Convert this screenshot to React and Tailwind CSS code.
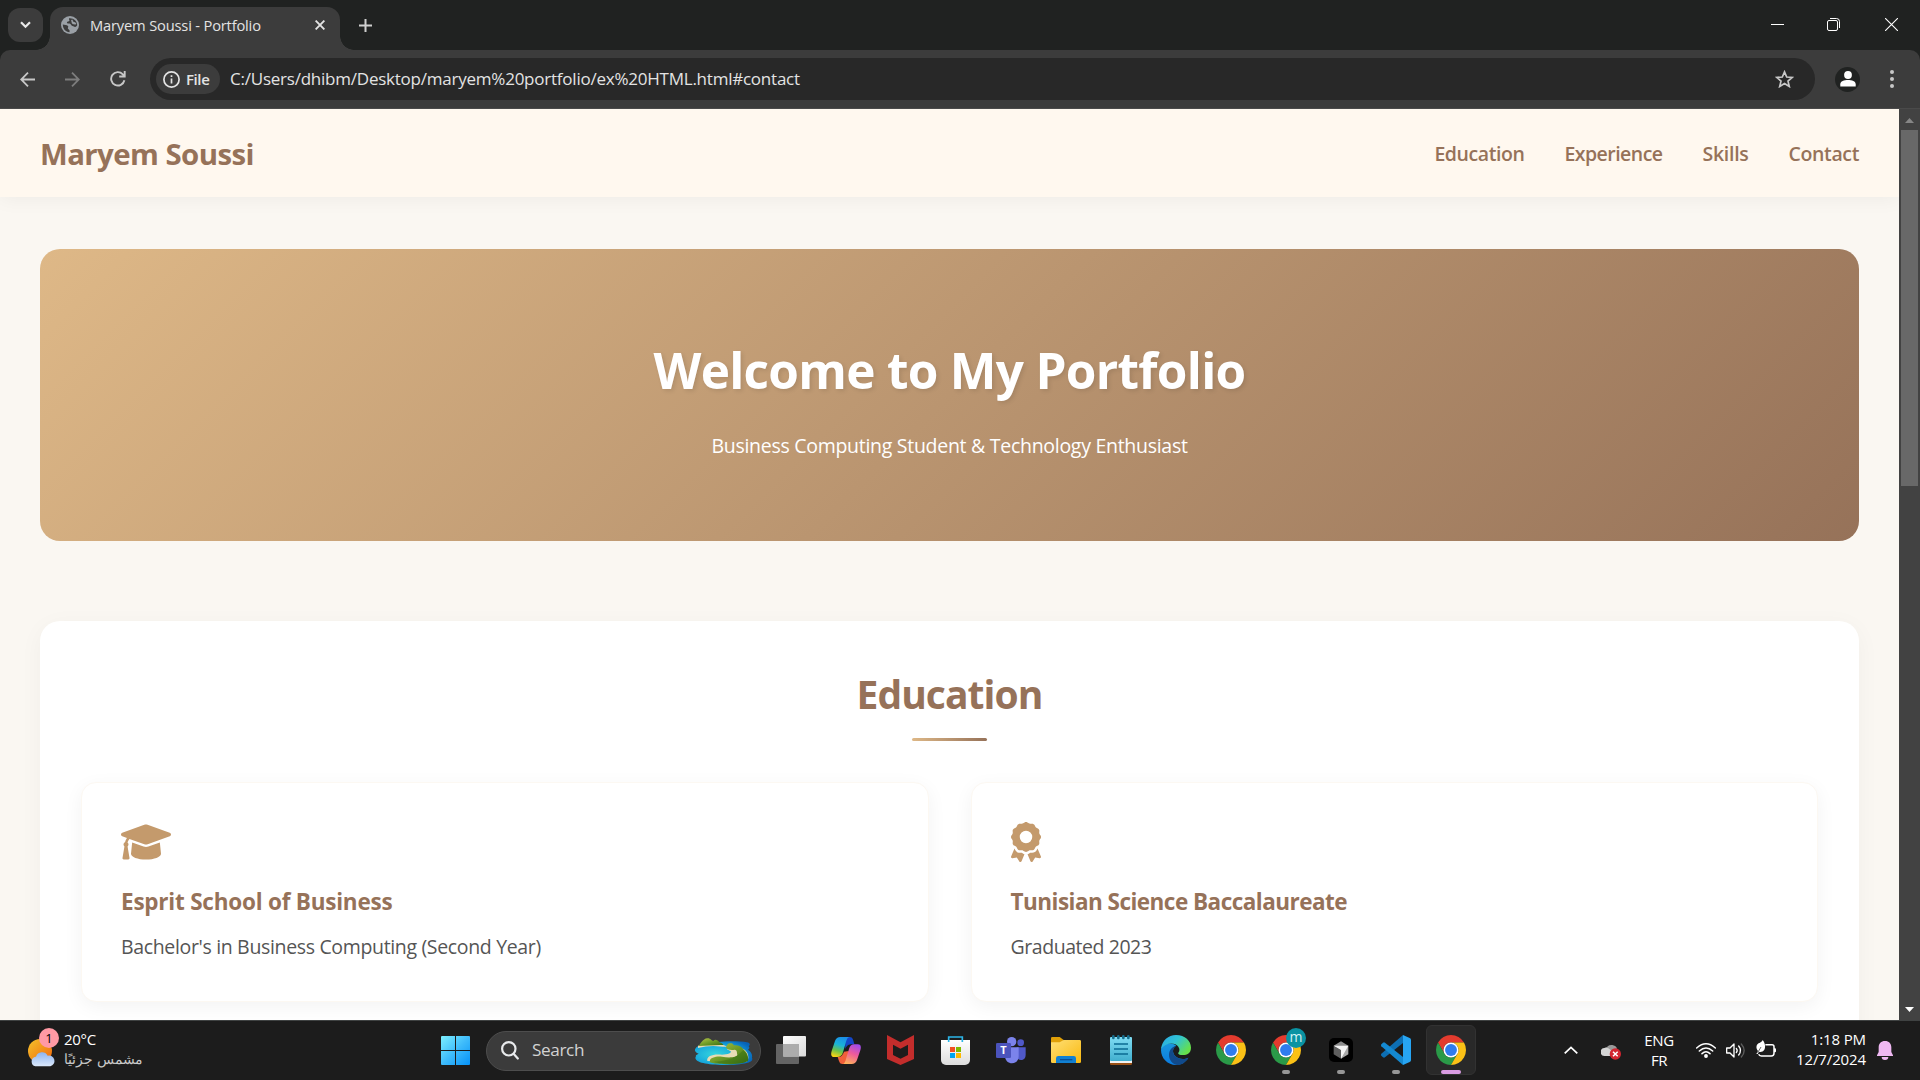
import { FaAward } from 'react-icons/fa6';

const navLinks = [
  { label: 'Education', className: 'tracking-[-0.43px]' },
  { label: 'Experience', className: 'tracking-[-0.53px]' },
  { label: 'Skills', className: 'tracking-[-0.28px]' },
  { label: 'Contact', className: 'tracking-[-0.37px]' },
];

/* ---------- browser chrome ---------- */

function TabStrip() {
  return (
    <div className="flex h-[50px] items-end bg-[#202221]">
      <button className="mb-2 ml-2 flex h-[34px] w-[35px] items-center justify-center rounded-xl bg-[#3c3c3c]">
        <svg width="11" height="8" viewBox="0 0 11 8" fill="none" stroke="#e8e8e8" strokeWidth="2.2">
          <path d="M1 1.2 5.5 5.8 10 1.2" />
        </svg>
      </button>
      <div className="relative ml-[7px] flex h-[43px] w-[290px] items-center rounded-t-[13px] bg-[#3c3c3c] pb-[7px] pl-[11px] pr-[15px]">
        <span className="absolute bottom-0 -left-[14px] size-[14px] bg-[radial-gradient(circle_at_0_0,transparent_13.5px,#3c3c3c_14px)]" />
        <span className="absolute bottom-0 -right-[14px] size-[14px] bg-[radial-gradient(circle_at_100%_0,transparent_13.5px,#3c3c3c_14px)]" />
        <svg width="18" height="18" viewBox="0 0 18 18">
          <circle cx="9" cy="9" r="9" fill="#9aa0a6" />
          <path d="M1.8 8.6C3.6 9 5.8 8.8 7 10c.9 1-.6 1.6 0 2.7.5.9 1.8.8 1.6 2.2l-.1 1.300C4.700 16.200 1.800 13 1.800 8.600Z" fill="#3c3c3c" />
          <path d="M8 2.200c-.3 1.500.8 1.700.4 2.500-.4.9-2.300.5-2.500 1.700-.2 1.100 1.500 1 2.700 1.100 1.500.2 1.300 2.300 2.900 2.500 1.300.1 1.600 1.100 2.800.9 1.300-.2 1.900-1.300 1.900-1.900C16.200 5 12.700 1.700 8 2.200Zm3.200 1.300c.9.600.3 1.500 1.300 2.300.8.700 2.200.3 2.700 1.600.2.800-.7 1.300-1.500 1-1.200-.4-1.700.2-2.600-.9-.8-1-.1-1.500-.8-2.300-.5-.6.1-1.500.9-1.700Z" fill="#3c3c3c" fillRule="evenodd" />
        </svg>
        <span className="-mt-px ml-[11px] grow whitespace-nowrap text-[14.7px] leading-5 tracking-[-0.18px] text-[#e3e3e3]">
          Maryem Soussi - Portfolio
        </span>
        <svg width="10" height="10" viewBox="0 0 10 10" stroke="#e3e3e3" strokeWidth="1.9">
          <path d="m.6.6 8.800 8.800M9.400.6.6 9.400" />
        </svg>
      </div>
      <svg className="mb-[18px] ml-[19px]" width="13" height="13" viewBox="0 0 13 13" stroke="#cfcfcf" strokeWidth="2">
        <path d="M6.500 0v13M0 6.500h13" />
      </svg>
      <div className="ml-auto flex h-[50px] items-center pb-px pr-[22px]">
        <div className="h-px w-[13px] bg-white" />
        <svg className="ml-[43px]" width="13" height="13" viewBox="0 0 13 13" fill="none" stroke="#fff">
          <path d="M3 .5h6.500a3 3 0 0 1 3 3V10" />
          <rect x=".5" y="2.5" width="10" height="10" rx="1.5" />
        </svg>
        <svg className="ml-[45px]" width="13" height="13" viewBox="0 0 13 13" stroke="#fff" strokeWidth="1.1">
          <path d="m0 0 13 13M13 0 0 13" />
        </svg>
      </div>
    </div>
  );
}

function Toolbar() {
  return (
    <div className="h-[59px] bg-[#202221]">
      <div className="flex h-full items-center rounded-t-[10px] border-b border-[#4a4a4a] bg-[#3c3c3c] pl-5 pr-[26px]">
        <svg width="15" height="15" viewBox="0 0 15 15" fill="none" stroke="#c7c7c7" strokeWidth="1.8">
          <path d="M15 7.500H1.200M8 .7 1.200 7.500 8 14.300" />
        </svg>
        <svg className="ml-[30px]" width="15" height="15" viewBox="0 0 15 15" fill="none" stroke="#7d7d7d" strokeWidth="1.8">
          <path d="M0 7.500h13.800M7 .7l6.800 6.800L7 14.300" />
        </svg>
        <svg className="ml-[30px]" width="16" height="16" viewBox="0 0 16 16" fill="none" stroke="#c7c7c7" strokeWidth="1.9">
          <path d="M14.400 9.300A6.700 6.700 0 1 1 12.800 3.300L14.600 5.200M14.700 0v5.500H9.200" />
        </svg>
        <div className="ml-6 flex h-[42px] w-[1665px] items-center rounded-full bg-[#282828] pl-[6px] pr-[21px]">
          <div className="flex h-[30px] w-16 items-center rounded-full bg-[#3c3c3c] pl-[7px]">
            <svg width="17" height="17" viewBox="0 0 17 17" fill="none" stroke="#e3e3e3" strokeWidth="1.7">
              <circle cx="8.5" cy="8.5" r="7.6" />
              <path d="M8.500 7.500v5M8.500 4.200v1.800" />
            </svg>
            <span className="-mt-px ml-[6px] text-[15px] font-semibold leading-5 tracking-[-0.4px] text-[#e3e3e3]">File</span>
          </div>
          <span className="ml-[10px] whitespace-nowrap text-[17px] leading-6 tracking-[-0.23px] text-[#e3e3e3]">
            C:/Users/dhibm/Desktop/maryem%20portfolio/ex%20HTML.html#contact
          </span>
          <svg className="ml-auto" width="19" height="18" viewBox="0 0 19 18" fill="none" stroke="#c7c7c7" strokeWidth="1.7">
            <path d="m9.500 1.900 2.200 5.100 5.500.5-4.200 3.600 1.300 5.400-4.800-2.900-4.800 2.900 1.300-5.400L1.800 7.500l5.500-.5z" />
          </svg>
        </div>
        <div className="ml-5 flex size-[25px] items-center justify-center rounded-full bg-[#202221]">
          <svg width="16" height="16" viewBox="0 0 16 16" fill="#fff">
            <circle cx="8" cy="4" r="3.9" />
            <path d="M.3 15.500v-2.200c0-3 3.800-4.300 7.700-4.300s7.700 1.300 7.700 4.300v2.200z" />
          </svg>
        </div>
        <div className="ml-auto flex flex-col gap-[3px]">
          <span className="size-1 rounded-full bg-[#c7c7c7]" />
          <span className="size-1 rounded-full bg-[#c7c7c7]" />
          <span className="size-1 rounded-full bg-[#c7c7c7]" />
        </div>
      </div>
    </div>
  );
}

function Scrollbar() {
  return (
    <div className="flex w-[21px] shrink-0 flex-col items-center bg-[#424242]">
      <svg className="mt-[9px]" width="9" height="5" viewBox="0 0 9 5" fill="#868686"><path d="M0 5 4.500 0 9 5z" /></svg>
      <div className="mt-[7px] h-[356px] w-[17px] bg-[#686868]" />
      <svg className="mb-2 mt-auto" width="9" height="5" viewBox="0 0 9 5" fill="#fff"><path d="M0 0 4.500 5 9 0z" /></svg>
    </div>
  );
}

/* ---------- page ---------- */

function GraduationCap() {
  return (
    <svg width="50" height="40" viewBox="0 0 640 512" fill="currentColor">
      <path d="M623.1 136.900l-282.700-101.200c-13.730-4.910-28.700-4.910-42.460 0L16.050 136.900C6.438 140.400 0 149.600 0 160s6.438 19.650 16.050 23.090L76.070 204.600c-11.890 15.800-20.260 34.160-24.550 53.950C40.050 263.400 32 274.800 32 288c0 9.953 4.814 18.490 11.940 24.360l-24.830 149C17.480 471.100 25 480 34.890 480H93.110c9.887 0 17.410-8.879 15.780-18.630l-24.830-149C91.190 306.500 96 297.100 96 288c0-10.290-5.174-19.030-12.720-24.890c4.252-17.760 12.880-33.820 24.940-47.030l190.600 68.230c13.730 4.910 28.700 4.910 42.460 0l282.700-101.200C633.600 179.600 640 170.400 640 160S633.600 140.400 623.100 136.900zM351.100 314.400C341.700 318.100 330.900 320 320 320c-10.920 0-21.690-1.867-32-5.555L142.800 262.500L128 405.300C128 446.600 213.100 480 320 480c105.100 0 192-33.400 192-74.670l-14.780-142.900L351.100 314.400z" />
    </svg>
  );
}

function Card({ icon, title, titleClass, text, textClass }) {
  return (
    <article className="h-[220px] rounded-[15px] border border-[#fcf8f2] bg-white px-[39px] pt-[39px] shadow-[0_5px_19px_rgba(0,0,0,0.05)]">
      <div className="h-10 text-[#c49a6c]">{icon}</div>
      <h3 className={'mt-[25px] whitespace-nowrap text-[22.5px] font-bold leading-[30px] text-[#967259] ' + titleClass}>{title}</h3>
      <p className={'mt-[14px] whitespace-nowrap text-[19.5px] leading-8 text-[#555] ' + textClass}>{text}</p>
    </article>
  );
}

function PortfolioPage() {
  return (
    <div className="grow overflow-hidden bg-[#faf7f2]">
      <header className="flex h-[88px] items-center justify-between bg-[#fff8ef] px-10 pt-[2px] text-[#967259] shadow-[0_2px_19px_rgba(0,0,0,0.05)]">
        <span className="whitespace-nowrap text-[29.4px] font-bold tracking-[-0.57px]">Maryem Soussi</span>
        <nav className="flex gap-10 text-[19.5px] font-semibold">
          {navLinks.map((l) => (
            <a key={l.label} className={l.className}>{l.label}</a>
          ))}
        </nav>
      </header>
      <section className="mx-10 mt-[52px] flex h-[292px] flex-col items-center rounded-[20px] bg-linear-[135deg,#deb887,#967259] pt-[91px] text-white">
        <h1 className="text-[49.5px] font-bold leading-[60px] tracking-[-0.7px] [text-shadow:2px_2px_4px_rgba(0,0,0,0.1)]">
          Welcome to My Portfolio
        </h1>
        <p className="mt-[30px] text-[19.5px] leading-8 tracking-[-0.28px]">Business Computing Student &amp; Technology Enthusiast</p>
      </section>
      <section className="mx-10 mt-20 h-[520px] rounded-[20px] bg-white px-[41px] pt-[41px] shadow-[0_5px_25px_rgba(0,0,0,0.04)]">
        <h2 className="text-center text-[39px] font-bold leading-[64px] tracking-[-0.93px] text-[#967259]">Education</h2>
        <div className="mx-auto mt-3 h-[3px] w-[75px] rounded-[2px] bg-linear-to-r from-[#deb887] to-[#967259]" />
        <div className="mt-[41px] grid grid-cols-2 gap-[42px]">
          <Card
            icon={<GraduationCap />}
            title="Esprit School of Business"
            titleClass="tracking-[-0.22px]"
            text="Bachelor's in Business Computing (Second Year)"
            textClass="tracking-[-0.34px]"
          />
          <Card
            icon={<FaAward className="h-10 w-[30px]" />}
            title="Tunisian Science Baccalaureate"
            titleClass="tracking-[-0.52px]"
            text="Graduated 2023"
            textClass="tracking-[-0.44px]"
          />
        </div>
      </section>
    </div>
  );
}

/* ---------- taskbar ---------- */

function WindowsLogo() {
  return (
    <svg width="29" height="29" viewBox="0 0 29 29">
      <defs>
        <linearGradient id="win" x1="0" y1="0" x2="29" y2="29" gradientUnits="userSpaceOnUse">
          <stop stopColor="#7df0ff" /><stop offset=".5" stopColor="#3fbcfb" /><stop offset="1" stopColor="#0592f8" />
        </linearGradient>
      </defs>
      <path fill="url(#win)" d="M1 0h13v14H0V1a1 1 0 0 1 1-1zM15 0h13a1 1 0 0 1 1 1v13H15zM0 15h14v14H1a1 1 0 0 1-1-1zM15 15h14v13a1 1 0 0 1-1 1H15z" />
    </svg>
  );
}

function SearchScene() {
  return (
    <svg width="60" height="28" viewBox="0 0 180 84">
      <defs>
        <radialGradient id="sea" cx=".35" cy=".55" r=".7">
          <stop stopColor="#35d6dd" /><stop offset=".6" stopColor="#15a5dc" /><stop offset="1" stopColor="#0762b8" />
        </radialGradient>
        <linearGradient id="hill" x1="0" y1="0" x2="1" y2="1">
          <stop stopColor="#b9c64a" /><stop offset=".5" stopColor="#6c9a26" /><stop offset="1" stopColor="#37660f" />
        </linearGradient>
      </defs>
      <path fill="url(#sea)" d="M6 32C20 16 120 8 158 16c10 2 12 6 6 12 4 4 2 8-2 10 8 4 14 14 12 24 4 8-4 14-16 16-30 8-104 8-130 0C10 74 0 66 6 58c-2-4 4-6 8-8-12-4-14-12-8-18Z" />
      <path fill="#e8dcb4" d="M12 33c16-4 30-5 46-6 18 0 30 4 42 2-14-10-60-11-88-3z" />
      <path fill="url(#hill)" d="M14 27c4-4 12-22 26-23 10-1 12 8 18 8 6-7 14-2 18 4 6 2 12 5 12 8-26-1-50 2-74 3Z" />
      <path fill="#e8dcb4" d="M40 72c-4-16 20-22 44-19 18 0 30-6 26-10l-12-7c14-4 52-10 62 12 6 14 2 24-4 27z" />
      <path fill="url(#hill)" d="M96 32c2-8 6-14 14-13 4-2 8 2 10 6 10-2 22 2 28 12 12 10 16 22 14 34-12 12-90 14-114 5-4-14 18-19 36-17 24 5 44 1 46-5-2-10 0-14-8-16-12 2-20 0-26-6Z" />
      <path fill="#356f12" opacity=".45" d="M60 74c30-2 60-8 76-24l12-10c8 8 14 18 14 31-12 10-80 12-102 3Z" />
    </svg>
  );
}

function TaskViewIcon() {
  return (
    <svg width="30" height="28" viewBox="0 0 30 28">
      <defs><linearGradient id="tv" x1="0" y1="0" x2="1" y2="1"><stop stopColor="#fff" /><stop offset="1" stopColor="#d9d9d9" /></linearGradient></defs>
      <rect y="8" width="23" height="20" rx="1" fill="#646464" />
      <rect x="7" width="23" height="20.5" rx="1" fill="url(#tv)" />
      <path d="M7 8h16v12.500H7z" fill="#acacac" />
    </svg>
  );
}

function CopilotIcon() {
  return (
    <svg width="30" height="27" viewBox="0 0 90 81">
      <defs>
        <linearGradient id="cpA" x1=".6" y1="0" x2=".3" y2="1">
          <stop stopColor="#1b8fe8" /><stop offset=".4" stopColor="#19b3d8" /><stop offset=".7" stopColor="#6cc24a" /><stop offset="1" stopColor="#f7d416" />
        </linearGradient>
        <linearGradient id="cpB" x1=".7" y1="0" x2=".3" y2="1">
          <stop stopColor="#a44bea" /><stop offset=".45" stopColor="#ee5a9b" /><stop offset="1" stopColor="#ffb25a" />
        </linearGradient>
      </defs>
      <path fill="#1446c8" d="M42 0h14c10 0 11 10 14 22h-8c-8 0-14 2-19 14z" />
      <path fill="#f2603a" d="M48 81H34c-9 0-10-10-14-21 10 0 14-4 19-16l14-2z" />
      <path fill="url(#cpA)" d="M28 0h28c-6 0-9 6-12 18l-8 28c-3 10-8 14-18 14h-8C0 60-1 52 2 42l10-30C15 4 20 0 28 0Z" />
      <path fill="url(#cpB)" d="M62 81H34c6 0 9-7 12-19l8-26c3-10 8-14 16-14h10c10 0 11 8 8 18L78 69c-3 8-8 12-16 12Z" />
    </svg>
  );
}

function McAfeeIcon() {
  return (
    <svg width="27" height="30" viewBox="0 0 81 90">
      <path fill="#c32d2c" fillRule="evenodd" d="M0 0l40.500 22L81 0v72L40.500 90 0 72zM18 29v31l22.500 11L63 60V29L40.500 41z" />
    </svg>
  );
}

function StoreIcon() {
  return (
    <svg width="29" height="29" viewBox="0 0 87 87">
      <defs><linearGradient id="st" x1="0" y1="0" x2="0" y2="1"><stop stopColor="#fff" /><stop offset="1" stopColor="#dcdcdc" /></linearGradient></defs>
      <path d="M0 12h87v60a15 15 0 0 1-15 15H15A15 15 0 0 1 0 72z" fill="url(#st)" />
      <path d="M23 18V3h41v15" fill="none" stroke="#2bb5e8" strokeWidth="5" />
      <path fill="#f25022" d="M27 33h15v15H27z" /><path fill="#7fba00" d="M45 33h15v15H45z" />
      <path fill="#00a4ef" d="M27 51h15v15H27z" /><path fill="#ffb900" d="M45 51h15v15H45z" />
    </svg>
  );
}

function TeamsIcon() {
  return (
    <svg width="30" height="27" viewBox="0 0 90 81">
      <circle cx="74" cy="17" r="10" fill="#5059c9" />
      <path d="M62 31h27v22c0 10-6 16-14 16-7 0-13-5-13-13z" fill="#5059c9" />
      <circle cx="47" cy="14" r="14" fill="#7b83eb" />
      <path d="M27 31h41v26c0 14-9 22-20 22S27 71 27 57z" fill="#7b83eb" />
      <rect y="18" width="45" height="45" rx="4" fill="#4b53bc" />
      <text x="22.5" y="52" textAnchor="middle" fontSize="33" fontWeight="700" fill="#fff">T</text>
    </svg>
  );
}

function FolderIcon() {
  return (
    <svg width="30" height="26" viewBox="0 0 90 78">
      <defs><linearGradient id="fo" x1="0" y1="0" x2="1" y2="1"><stop stopColor="#ffdf75" /><stop offset="1" stopColor="#f9b90f" /></linearGradient></defs>
      <path d="M0 4q0-4 4-4h22l12 9v14H0z" fill="#e0a008" />
      <path d="M0 16h26l12-7h48q4 0 4 4v61q0 4-4 4H4q-4 0-4-4z" fill="url(#fo)" />
      <path d="M15 78V64q0-7 7-7h46q7 0 7 7v14z" fill="#1180d2" />
      <path d="M27 68h37" stroke="#0b4f96" strokeWidth="4" />
    </svg>
  );
}

function NotepadIcon() {
  return (
    <svg width="22" height="30" viewBox="0 0 66 90">
      <defs><linearGradient id="np" x1="0" y1="0" x2="0" y2="1"><stop stopColor="#7fdcf3" /><stop offset="1" stopColor="#41afcf" /></linearGradient></defs>
      <path d="M0 78h66v8q0 4-4 4H4q-4 0-4-4z" fill="#9a5015" />
      <path d="M0 74h66v10H0z" fill="#f1f1f1" />
      <rect y="6" width="66" height="72" rx="3" fill="url(#np)" />
      <path d="M12 27h42M12 42h42M12 57h42" stroke="#0a6b93" strokeWidth="5" />
      <path d="M10 4v5M25 4v5M40 4v5M55 4v5" stroke="#176d8c" strokeWidth="8" strokeLinecap="round" />
    </svg>
  );
}

function EdgeIcon() {
  return (
    <svg width="30" height="30" viewBox="0 0 90 90">
      <defs>
        <linearGradient id="edA" x1="0" y1="0" x2="1" y2=".6"><stop stopColor="#2aa5e6" /><stop offset=".5" stopColor="#30c4d4" /><stop offset="1" stopColor="#66e04a" /></linearGradient>
        <linearGradient id="edB" x1="0" y1="0" x2="0" y2="1"><stop stopColor="#1a97dc" /><stop offset="1" stopColor="#0a7be0" /></linearGradient>
      </defs>
      <path fill="url(#edB)" d="M0 45C2 22 28 20 46 32c-12 6-13 20-4 30 10 11 28 12 40 6-8 14-22 22-37 22C20 90 0 70 0 45Z" />
      <path fill="#114a8b" d="M24 60c0-18 12-26 22-28-12 8-12 22-4 30 10 11 28 12 40 6-8 14-20 22-34 22C34 88 24 74 24 60Z" />
      <path fill="url(#edA)" d="M0 42C3 16 22 0 45 0c27 0 45 18 45 38 0 16-12 22-24 22-10 0-16-3-14-7 4-5 5-11 0-18C42 20 12 22 0 42Z" />
    </svg>
  );
}

function ChromeIcon() {
  return (
    <svg width="30" height="30" viewBox="0 0 48 48">
      <path fill="#e33b2e" d="M24 12h20.780A24 24 0 0 0 3.220 12L13.600 30A12 12 0 0 1 24 12z" />
      <path fill="#2a9a48" d="M34.390 30 24 48A24 24 0 0 1 3.220 12L13.600 30a12 12 0 0 0 20.790 0z" />
      <path fill="#fbc116" d="M24 12h20.780A24 24 0 0 1 24 48l10.390-18A12 12 0 0 0 24 12z" />
      <circle cx="24" cy="24" r="12" fill="#fff" />
      <circle cx="24" cy="24" r="9.5" fill="#2f7cee" />
    </svg>
  );
}

function CursorIcon() {
  return (
    <svg width="24" height="24" viewBox="0 0 72 72">
      <rect width="72" height="72" rx="15" fill="#000" />
      <path d="M36 10 58 23 36 36 14 23z" fill="#8b8b8b" />
      <path d="M14 23 36 36v26L14 49z" fill="#5e5e5e" />
      <path d="M58 23v26L36 62V36z" fill="#a9a9a9" />
      <path d="M14 23h44L36 62V36z" fill="#f3f3f3" />
    </svg>
  );
}

function VSCodeIcon() {
  return (
    <svg width="30" height="30" viewBox="0 0 90 90">
      <path d="M66 0v24L12 67q-3 2-6 0l-5-5q-2-3 0-6z" fill="#0d6fb4" />
      <path d="M66 90V66L12 23q-3-2-6 0l-5 5q-2 3 0 6z" fill="#1489d1" />
      <path d="M66 0l20 9q4 2 4 6v60q0 4-4 6l-20 9z" fill="#27a5f3" />
    </svg>
  );
}

function AppCell({ children, indicator }) {
  return (
    <div className="relative flex h-full w-[55px] items-center justify-center pb-px">
      {children}
      {indicator && <span className="absolute bottom-[6px] h-1 w-2 rounded-full bg-[#969696]" />}
    </div>
  );
}

function Taskbar() {
  return (
    <div className="flex h-[60px] items-center border-t border-[#3f4242] bg-[#1c1c1c] text-white">
      <div className="flex w-[441px] items-center pb-[3px] pl-7">
        <div className="relative h-[38px] w-8">
          <svg className="mt-[9px]" width="28" height="28" viewBox="0 0 84 84">
            <defs>
              <linearGradient id="sun" x1="0" y1="0" x2="1" y2="1"><stop stopColor="#f5c22b" /><stop offset="1" stopColor="#f0660c" /></linearGradient>
              <linearGradient id="cl" x1="0" y1="0" x2="0" y2="1"><stop stopColor="#8db4ef" /><stop offset="1" stopColor="#dbe8fb" /></linearGradient>
            </defs>
            <circle cx="36" cy="36" r="36" fill="url(#sun)" />
            <path d="M22 82a15 15 0 0 1 0-29h2a19 19 0 0 1 35-3 16 16 0 0 1 8 32z" fill="url(#cl)" />
          </svg>
          <span className="absolute -top-[2px] left-[11px] flex size-5 items-center justify-center rounded-full bg-[#ff99a4] text-[13px] leading-none text-black">1</span>
        </div>
        <div className="ml-1 flex flex-col">
          <span className="text-[15px] leading-[20px] tracking-[-0.3px]">20°C</span>
          <span dir="rtl" className="text-[14px] leading-[20px] text-[#c8c8c8]">مشمس جزئيًا</span>
        </div>
      </div>
      <WindowsLogo />
      <div className="ml-4 flex h-10 w-[275px] items-center rounded-full border border-[#4d4d4d] bg-[#3b3b3b] pl-[14px] pr-[6px]">
        <svg width="18" height="19" viewBox="0 0 18 19" fill="none" stroke="#e8eaec" strokeWidth="2.2" strokeLinecap="round">
          <circle cx="7.8" cy="7.8" r="6.7" /><path d="m12.800 13 4 4.500" />
        </svg>
        <span className="-mt-px ml-[13px] text-[17.2px] leading-6 tracking-[-0.4px] text-[#d2d2d2]">Search</span>
        <span className="ml-auto"><SearchScene /></span>
      </div>
      <div className="ml-[2px] flex h-full">
        <AppCell><TaskViewIcon /></AppCell>
        <AppCell><CopilotIcon /></AppCell>
        <AppCell><McAfeeIcon /></AppCell>
        <AppCell><StoreIcon /></AppCell>
        <AppCell><TeamsIcon /></AppCell>
        <AppCell><FolderIcon /></AppCell>
        <AppCell><NotepadIcon /></AppCell>
        <AppCell><EdgeIcon /></AppCell>
        <AppCell><ChromeIcon /></AppCell>
        <AppCell indicator>
          <ChromeIcon />
          <span className="absolute right-[7px] top-[7px] flex size-5 items-center justify-center rounded-full bg-[#0a93a3] pb-[3px] text-[14px] leading-none text-[#d5f2f4]">m</span>
        </AppCell>
        <AppCell indicator><CursorIcon /></AppCell>
        <AppCell indicator><VSCodeIcon /></AppCell>
        <div className="flex h-full w-[56px] items-center justify-center pb-px">
          <div className="relative flex size-[50px] items-center justify-center rounded-[6px] border border-[#323232] bg-[#292929]">
            <ChromeIcon />
            <span className="absolute bottom-0 h-1 w-5 rounded-full bg-[#d99be2]" />
          </div>
        </div>
      </div>
      <div className="ml-auto flex items-center pb-px pr-[27px]">
        <svg width="14" height="8" viewBox="0 0 14 8" fill="none" stroke="#fff" strokeWidth="1.7"><path d="m.7 7.400 6.300-6 6.300 6" /></svg>
        <svg className="ml-[23px] mt-1" width="20" height="18" viewBox="0 0 60 54">
          <path d="M18 12a18 18 0 0 1 30 4l-22 22H12A12 12 0 0 1 10 15z" fill="#9a9a9a" />
          <path d="M12 39A12 12 0 0 1 10 15q10-3 18 5l22 19z" fill="#d4d4d4" />
          <circle cx="43" cy="33" r="17" fill="#d32530" />
          <path d="m36 26 14 14M50 26 36 40" stroke="#fff" strokeWidth="4.5" />
        </svg>
        <div className="-mt-px ml-[22px] flex w-[32px] flex-col items-center text-[15px] leading-5 tracking-[-0.4px]">
          <span>ENG</span><span>FR</span>
        </div>
        <svg className="ml-[21px]" width="20" height="15" viewBox="0 0 60 45" fill="none" stroke="#fff" strokeWidth="4.5" strokeLinecap="round">
          <path d="M2 15Q30-10 58 15M10 24q20-18 40 0M18 32q12-11 24 0" /><circle cx="30" cy="39" r="3.5" fill="#fff" />
        </svg>
        <svg className="ml-[10px]" width="20" height="17" viewBox="0 0 60 51" fill="none" stroke="#fff" strokeWidth="4" strokeLinejoin="round" strokeLinecap="round">
          <path d="M2 18h10L24 6v39L12 33H2z" /><path d="M31 19q5 6 0 13M38 12q11 13 0 27" /><path d="M46 6q17 20 0 39" stroke="#5c5c5c" />
        </svg>
        <svg className="-mt-[2px] ml-[10px]" width="20" height="18" viewBox="0 0 60 54">
          <path d="M28 14h20q6 0 6 6v20q0 8-8 8H16q-6 0-8-5" fill="none" stroke="#fff" strokeWidth="4.5" />
          <path d="M54 25h3q3 0 3 3v6q0 3-3 3h-3z" fill="#fff" />
          <path d="M20 0c8 10 9 22 5 29-4 6-11 8-16 6L5 42H1l5-9C-3 22 2 10 12 8c4-2 7-5 8-8z" fill="#fff" />
          <path d="m5 38 10-17" stroke="#1c1c1c" strokeWidth="2" />
        </svg>
        <div className="-mt-[3px] ml-5 flex w-[70px] flex-col items-end whitespace-nowrap text-[15px] leading-5 tracking-[-0.12px]">
          <span>1:18 PM</span><span>12/7/2024</span>
        </div>
        <svg className="ml-[11px]" width="16" height="19" viewBox="0 0 48 57" fill="#efb8f2">
          <path d="M24 0c12 0 19 8 19 19v14l5 10v2H0v-2l5-10V19C5 8 12 0 24 0ZM14 48h20a10 9 0 0 1-20 0z" />
        </svg>
      </div>
    </div>
  );
}

export default function App() {
  return (
    <div className="flex h-[1080px] w-[1920px] flex-col overflow-hidden font-['Open_Sans','Noto_Sans',sans-serif]">
      <TabStrip />
      <Toolbar />
      <div className="flex h-[911px] shrink-0">
        <PortfolioPage />
        <Scrollbar />
      </div>
      <Taskbar />
    </div>
  );
}
